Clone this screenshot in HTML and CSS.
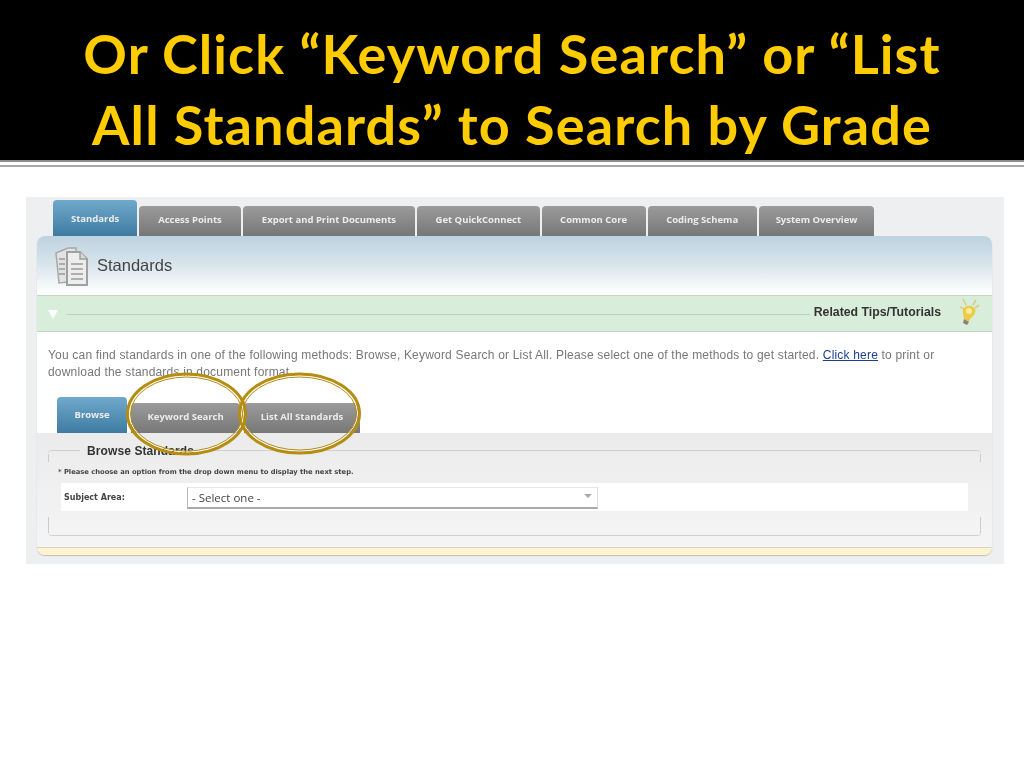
FILE: index.html
```html
<!DOCTYPE html>
<html lang="en">
<head>
    <meta charset="UTF-8">
    <meta name="viewport" content="width=device-width, initial-scale=1.0">
    <title>Or Click Keyword Search or List All Standards</title>
    <link rel="stylesheet" href="styles.css">
</head>
<body>
    <header class="title-bar">
        <h1>Or Click “Keyword Search” or “List<br>All Standards” to Search by Grade</h1>
    </header>
    <div class="rule"></div>

    <main class="shot">
        <nav class="tabs">
            <a class="tab tab-active">Standards</a>
            <a class="tab">Access Points</a>
            <a class="tab">Export and Print Documents</a>
            <a class="tab tab-tight">Get QuickConnect</a>
            <a class="tab tab-tight">Common Core</a>
            <a class="tab tab-tight">Coding Schema</a>
            <a class="tab">System Overview</a>
        </nav>

        <section class="panel">
            <div class="panel-head">
                <svg class="doc-icon" width="36" height="40" viewBox="0 0 36 40">
                    <path d="M2 6 L14 1 L22 1 L22 34 L5 36 Z" fill="#e2e2e2" stroke="#a8a8a8" stroke-width="1.5"/>
                    <path d="M5 12h6M5 17h6M5 22h6M5 27h6" stroke="#999" stroke-width="1.5"/>
                    <path d="M13 5 H26 L33 12 V38 H13 Z" fill="#ededed" stroke="#a0a0a0" stroke-width="2"/>
                    <path d="M26 5 V12 H33" fill="#d8d8d8" stroke="#a0a0a0" stroke-width="1.5"/>
                    <path d="M17 17h12M17 22h12M17 27h12M17 32h12" stroke="#9a9a9a" stroke-width="1.6"/>
                </svg>
                <h2>Standards</h2>
            </div>

            <div class="tips-bar">
                <span class="tips-arrow"></span>
                <span class="tips-line"></span>
                <strong>Related Tips/Tutorials</strong>
                <svg class="bulb" width="22" height="28" viewBox="0 0 22 28">
                    <path d="M4 1l3 6M17 2l-3 5M20 7l-4 3M1 9l4 2" stroke="#d3cd92" stroke-width="1.6"/>
                    <path d="M5 21l5 3 1-3 4-4c3-4 1-8-3-9-5-1-9 2-8 7z" fill="#eccb45"/>
                    <circle cx="10" cy="13" r="3" fill="#f9ec9f"/>
                    <path d="M5 21l5 3-2 3-4-2z" fill="#85857c"/>
                </svg>
            </div>

            <div class="panel-body">
                <p class="intro">You can find standards in one of the following methods: Browse, Keyword Search or List All. Please select one of the methods to get started. <a class="intro-link">Click here</a> to print or<br>download the standards in document format.</p>
                <nav class="tabs sub-tabs">
                    <a class="tab tab-active">Browse</a>
                    <a class="tab">Keyword Search</a>
                    <a class="tab">List All Standards</a>
                </nav>
            </div>

            <div class="browse-area">
                <div class="browse-box">
                    <h3 class="browse-legend">Browse Standards</h3>
                    <p class="note">* Please choose an option from the drop down menu to display the next step.</p>
                    <div class="form-row">
                        <label class="form-label">Subject Area:</label>
                        <div class="select-box">
                            <span>- Select one -</span>
                            <i class="select-arrow"></i>
                        </div>
                    </div>
                </div>
            </div>
            <div class="cream-bar"></div>
        </section>
    </main>

    <!-- hand drawn circles that sit over the slide -->
    <svg class="circles" width="1024" height="768" viewBox="0 0 1024 768">
        <g fill="none">
            <ellipse cx="186.5" cy="414" rx="57" ry="38" stroke="#fff" stroke-width="1"/>
            <ellipse cx="299.5" cy="413.5" rx="58" ry="37.5" stroke="#fff" stroke-width="1"/>
            <g stroke="#b58d12">
                <ellipse cx="186.5" cy="414" rx="59" ry="40" stroke-width="3"/>
                <ellipse cx="186.5" cy="414" rx="56" ry="37" stroke-width="1"/>
                <ellipse cx="299.5" cy="413.5" rx="60" ry="39.5" stroke-width="3"/>
                <ellipse cx="299.5" cy="413.5" rx="57" ry="36.5" stroke-width="1"/>
            </g>
        </g>
    </svg>
</body>
</html>
```

FILE: styles.css
```css
html, body {
    margin: 0;
    padding: 0;
    background: #fff;
}
body {
    position: relative;
    width: 1024px;
    height: 768px;
    overflow: hidden;
    font-family: "Liberation Sans", Arial, sans-serif;
}
.title-bar {
    height: 160px;
    background: #000;
    box-sizing: border-box;
    padding-top: 18px;
}
.title-bar h1 {
    margin: 0;
    text-align: center;
    font-family: Lato, "Open Sans", sans-serif;
    font-size: 54px;
    font-weight: 700;
    line-height: 71px;
    letter-spacing: 1.1px;
    color: #fc0;
}
.rule {
    height: 3px;
    border-top: 2px solid #8c8c8c;
    border-bottom: 2px solid #a8a8a8;
    margin-bottom: 30px;
}

/* the pasted screenshot */
.shot {
    margin-left: 26px;
    width: 978px;
    height: 367px;
    box-sizing: border-box;
    padding: 3px 12px 0 11px;
    background: #eeeff1;
    filter: blur(0.35px);
}
.tabs {
    display: flex;
    align-items: flex-end;
    gap: 2px;
    height: 36px;
    padding-left: 16px;
}
.tab {
    display: flex;
    align-items: center;
    justify-content: center;
    box-sizing: border-box;
    height: 30px;
    padding: 0 19px 3px;
    border-radius: 4px 4px 0 0;
    background: linear-gradient(#9b9b9b, #777);
    color: #ececec;
    font-family: "Open Sans", sans-serif;
    font-size: 9.5px;
    font-weight: 700;
    white-space: nowrap;
}
.tab-tight {
    padding: 0 18.5px 3px;
}
.tab:last-child {
    padding: 0 17px 3px;
}
.tab-active {
    height: 36px;
    padding: 0 18px;
    background: linear-gradient(#6fa9cc, #3f7ba1);
}
.panel {
    height: 319px;
    display: flex;
    flex-direction: column;
    border-radius: 8px;
    background: #fff;
    box-shadow: 0 1px 1px #bbb;
    overflow: hidden;
}
.panel-head {
    height: 59px;
    flex: none;
    display: flex;
    align-items: center;
    gap: 7px;
    padding-left: 17px;
    background: linear-gradient(#bdd3e0, #d6e3eb 45%, #fff 98%);
}
.panel-head h2 {
    margin: 0;
    font-size: 16.5px;
    font-weight: 400;
    color: #444;
}
.doc-icon {
    margin: 3px 0 0 0;
}
.tips-bar {
    height: 37px;
    flex: none;
    box-sizing: border-box;
    display: flex;
    align-items: center;
    padding: 0 11px 3px 11px;
    background: #d9eeda;
    border-top: 1px solid #c3d6c5;
    border-bottom: 1px solid #c3d6c5;
}
.tips-arrow {
    width: 0;
    height: 0;
    margin-top: 4px;
    border-left: 5px solid transparent;
    border-right: 5px solid transparent;
    border-top: 9px solid #fff;
}
.tips-line {
    flex: 1;
    height: 1px;
    margin: 4px 4px 0 9px;
    background: #bccfbe;
}
.tips-bar strong {
    font-size: 12.3px;
    color: #333;
}
.bulb {
    margin-left: 18px;
}
.panel-body {
    height: 101px;
    flex: none;
    box-sizing: border-box;
    padding: 15px 11px 0;
}
.intro {
    margin: 0;
    height: 50px;
    font-size: 12px;
    line-height: 17px;
    letter-spacing: 0.19px;
    color: #777;
}
.intro-link {
    color: #1c3f94;
    text-decoration: underline;
}
.sub-tabs {
    padding-left: 9px;
    gap: 4px;
}
.sub-tabs .tab {
    padding: 0 16.5px 3px;
}
.sub-tabs .tab-active {
    padding: 0 17.5px 1px;
}
.browse-area {
    flex: 1;
    padding: 17px 11px 0;
    background: linear-gradient(#ebebeb, #f5f5f5);
}
.browse-box {
    height: 86px;
    box-sizing: border-box;
    padding: 0 13px;
    border-top: 1px solid #d0d0d0;
    border-bottom: 1px solid #d0d0d0;
    border-radius: 4px;
    background:
        linear-gradient(#ccc, #ccc) left 0 top 3px / 1px 8px no-repeat,
        linear-gradient(#ccc, #ccc) right 0 top 3px / 1px 8px no-repeat,
        linear-gradient(#ccc, #ccc) left 0 bottom 2px / 1px 16px no-repeat,
        linear-gradient(#ccc, #ccc) right 0 bottom 2px / 1px 16px no-repeat;
}
.browse-legend {
    width: max-content;
    margin: -7px 0 0 19px;
    padding: 0 7px;
    background: #ececec;
    font-size: 12px;
    line-height: 14px;
    letter-spacing: 0.1px;
    color: #333;
}
.note {
    margin: 10px 0 0 -3px;
    font-family: "DejaVu Sans", sans-serif;
    font-size: 6.75px;
    line-height: 9px;
    font-weight: 700;
    color: #444;
}
.form-row {
    display: flex;
    align-items: center;
    height: 28px;
    margin-top: 6px;
    background: #fff;
}
.form-label {
    width: 120px;
    box-sizing: border-box;
    padding-left: 3px;
    margin-right: 6px;
    font-family: "DejaVu Sans", sans-serif;
    font-size: 8px;
    font-weight: 700;
    color: #444;
}
.select-box {
    width: 411px;
    height: 22px;
    margin-top: 2px;
    box-sizing: border-box;
    display: flex;
    align-items: center;
    justify-content: space-between;
    padding: 0 5px 0 4px;
    border: 1px solid #ddd;
    border-top-color: #e6e6e6;
    border-bottom: 2px solid #aaa;
    border-left-color: #bbb;
    font-family: "Open Sans", sans-serif;
    font-size: 11.5px;
    color: #444;
}
.select-arrow {
    width: 0;
    height: 0;
    margin-bottom: 4px;
    border-left: 4px solid transparent;
    border-right: 4px solid transparent;
    border-top: 4px solid #aaa;
}
.cream-bar {
    height: 8px;
    flex: none;
    background: #fdf3d1;
    border-top: 1px solid #d8d4c4;
    box-sizing: border-box;
}
.circles {
    position: absolute;
    left: 0;
    top: 0;
    pointer-events: none;
}
```
